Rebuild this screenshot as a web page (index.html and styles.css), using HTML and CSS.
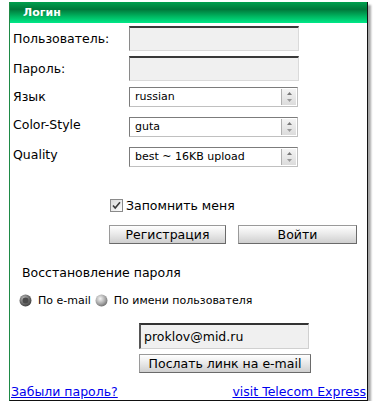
FILE: index.html
```html
<!DOCTYPE html>
<html>
<head>
    <title>Логин</title>
    <meta charset="utf-8">
    <link rel="stylesheet" href="styles.css">
</head>
<body>
    <div class="panel">
        <div class="panel-head">Логин</div>

        <div class="form-grid">
            <label class="lbl">Пользователь:</label>
            <input class="text-in" type="text">

            <label class="lbl">Пароль:</label>
            <input class="text-in" type="password">

            <label class="lbl">Язык</label>
            <div class="fake-select">
                <span class="sel-text">russian</span>
                <span class="sel-spin">
                    <svg width="9" height="14" viewBox="0 0 9 14"><path d="M2 5 L4.5 2 L7 5 Z" fill="#777"/><path d="M2 9 L4.5 12 L7 9 Z" fill="#999"/></svg>
                </span>
            </div>

            <label class="lbl">Color-Style</label>
            <div class="fake-select">
                <span class="sel-text">guta</span>
                <span class="sel-spin">
                    <svg width="9" height="14" viewBox="0 0 9 14"><path d="M2 5 L4.5 2 L7 5 Z" fill="#777"/><path d="M2 9 L4.5 12 L7 9 Z" fill="#999"/></svg>
                </span>
            </div>

            <label class="lbl">Quality</label>
            <div class="fake-select">
                <span class="sel-text">best ~ 16KB upload</span>
                <span class="sel-spin">
                    <svg width="9" height="14" viewBox="0 0 9 14"><path d="M2 5 L4.5 2 L7 5 Z" fill="#777"/><path d="M2 9 L4.5 12 L7 9 Z" fill="#999"/></svg>
                </span>
            </div>
        </div>

        <div class="remember">
            <svg class="check" width="13" height="13" viewBox="0 0 13 13">
                <defs>
                    <linearGradient id="cb" x1="0" y1="0" x2="1" y2="1">
                        <stop offset="0" stop-color="#d8d8d8"/>
                        <stop offset="1" stop-color="#ffffff"/>
                    </linearGradient>
                </defs>
                <rect x="0.5" y="0.5" width="12" height="12" fill="url(#cb)" stroke="#8a8a8a"/>
                <path d="M3 6.5 L5.2 9 L10 3.2" fill="none" stroke="#3a3a3a" stroke-width="1.6"/>
            </svg>
            <span>Запомнить меня</span>
        </div>

        <div class="btn-row">
            <button class="btn btn-reg">Регистрация</button>
            <button class="btn btn-login">Войти</button>
        </div>

        <div class="restore-title">Восстановление пароля</div>

        <div class="radio-row">
            <svg class="radio" width="13" height="13" viewBox="0 0 13 13">
                <defs>
                    <radialGradient id="r1" cx="0.4" cy="0.35" r="0.7">
                        <stop offset="0" stop-color="#c8c8c8"/>
                        <stop offset="0.6" stop-color="#6a6a6a"/>
                        <stop offset="1" stop-color="#3a3a3a"/>
                    </radialGradient>
                </defs>
                <circle cx="6.5" cy="6.5" r="6" fill="url(#r1)"/>
                <circle cx="6.5" cy="6.5" r="3" fill="#4a4a4a"/>
            </svg>
            <span class="radio-lbl">По e-mail</span>
            <svg class="radio" width="13" height="13" viewBox="0 0 13 13">
                <defs>
                    <radialGradient id="r2" cx="0.4" cy="0.35" r="0.7">
                        <stop offset="0" stop-color="#f4f4f4"/>
                        <stop offset="0.6" stop-color="#a8a8a8"/>
                        <stop offset="1" stop-color="#6a6a6a"/>
                    </radialGradient>
                </defs>
                <circle cx="6.5" cy="6.5" r="6" fill="url(#r2)"/>
            </svg>
            <span class="radio-lbl">По имени пользователя</span>
        </div>

        <div class="mail-box">
            <input class="mail-in" type="text" value="proklov@mid.ru">
            <button class="btn btn-send">Послать линк на e-mail</button>
        </div>

        <div class="links">
            <a href="#">Забыли пароль?</a>
            <a href="#">visit Telecom Express</a>
        </div>
    </div>
</body>
</html>
```

FILE: styles.css
```css
body { margin: 0; padding: 2px 0 0 9px; background: #fff; font-family: "DejaVu Sans", Verdana, sans-serif; font-size: 12px; color: #000; }
.panel { width: 357px; height: 398px; border-left: 1px solid #1e8a46; border-right: 1px solid #111; border-bottom: 1px solid #111; box-shadow: 3px 3px 2px rgba(0,0,0,0.35); display: flex; flex-direction: column; position: relative; }
.panel-head { height: 21px; line-height: 21px; padding-left: 13px; color: #fff; font-weight: bold; font-size: 11px; background: linear-gradient(#00a04e, #00783a 35%, #00b862 70%, #00e888); }
.form-grid { display: grid; grid-template-columns: 119px 170px; row-gap: 5px; align-items: center; margin-top: 3px; }
.lbl { padding-left: 3px; font-size: 12.5px; }
.text-in { box-sizing: border-box; width: 170px; height: 25px; margin: 0; background: #f0f0f0; border: 1px solid #dadada; border-top: 2px solid #3a3a3a; border-left: 1px solid #8a8a8a; }
.form-grid .fake-select { margin-top: 5px; }
.form-grid .fake-select:nth-of-type(1) { margin-top: 1px; }
.fake-select { box-sizing: border-box; width: 169px; height: 20px; display: flex; align-items: stretch; background: #fff; border: 1px solid #7c7c7c; border-right-color: #c0c0c0; border-bottom-color: #c0c0c0; }
.sel-text { flex: 1; font-size: 11px; line-height: 18px; padding-left: 5px; }
.sel-spin { width: 14px; margin: 1px 1px 1px 0; display: flex; align-items: center; justify-content: center; background: linear-gradient(#f4f4f4, #dcdcdc); border-left: 1px solid #b0b0b0; }
.remember { display: flex; align-items: center; gap: 3px; margin: 31px 0 0 100px; font-size: 12.5px; }
.btn-row { display: flex; gap: 12px; margin: 12px 0 0 99px; }
.btn { box-sizing: border-box; height: 19px; padding: 0; font-family: "DejaVu Sans", Verdana, sans-serif; font-size: 12.5px; color: #000; background: linear-gradient(#ffffff, #e8e8e8 50%, #cfcfcf); border: 1px solid #6a6a6a; border-top-color: #9a9a9a; border-left-color: #9a9a9a; }
.btn-reg { width: 117px; }
.btn-login { width: 119px; }
.restore-title { margin: 21px 0 0 12px; font-size: 12.5px; }
.radio-row { display: flex; align-items: center; margin: 14px 0 0 9px; font-size: 11px; }
.radio-lbl { margin: 0 4px 0 6px; }
.mail-box { display: flex; flex-direction: column; gap: 5px; margin: 16px 0 0 129px; }
.mail-in { box-sizing: border-box; width: 170px; height: 26px; margin: 0; padding: 0 3px; font-family: "DejaVu Sans", Verdana, sans-serif; font-size: 12.5px; background: #f0f0f0; border: 1px solid #d0d0d0; border-top: 2px solid #333; border-left: 2px solid #555; }
.btn-send { width: 172px; }
.links { display: flex; justify-content: space-between; margin-top: auto; padding: 0 1px 1px 1px; font-size: 12.5px; }
.links a { color: #0000ee; text-decoration: underline; }
```
